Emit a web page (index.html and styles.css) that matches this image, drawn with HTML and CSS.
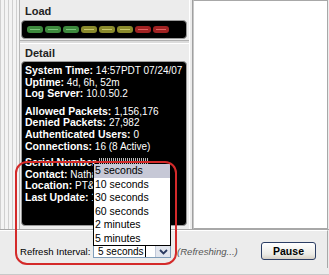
FILE: index.html
```html
<!DOCTYPE html>
<html>
<head>
<meta charset="utf-8">
<link rel="stylesheet" href="styles.css">
</head>
<body>
<div class="window">
  <div class="top">
    <div class="stripes"></div>
    <div class="left">
      <div class="head">Load</div>
      <div class="loadbox">
        <span class="led g"></span><span class="led g"></span><span class="led g"></span>
        <span class="led y"></span><span class="led y"></span><span class="led y"></span>
        <span class="led r"></span><span class="led r"></span>
      </div>
      <div class="sep"></div>
      <div class="head head2">Detail</div>
      <div class="detail">
        <div class="grp">
          <div><b>System Time:</b> 14:57PDT 07/24/07</div>
          <div><b>Uptime:</b> 4d, 6h, 52m</div>
          <div><b>Log Server:</b> 10.0.50.2</div>
        </div>
        <div class="grp">
          <div><b>Allowed Packets:</b> 1,156,176</div>
          <div><b>Denied Packets:</b> 27,982</div>
          <div><b>Authenticated Users:</b> 0</div>
          <div><b>Connections:</b> 16 (8 Active)</div>
        </div>
        <div class="grp">
          <div><b>Serial Number</b> <span class="blur"></span></div>
          <div><b>Contact:</b> Nathan</div>
          <div><b>Location:</b> PT&amp;P</div>
          <div><b>Last Update:</b> 14:57</div>
        </div>
      </div>
    </div>
    <div class="divider"></div>
    <div class="right"></div>
  </div>
  <div class="bottom">
    <span class="lbl">Refresh Interval:</span>
    <div class="select"><span class="val">5 seconds</span><span class="caret"></span><span class="arrow"><svg width="9" height="6" viewBox="0 0 9 6"><path d="M1 1 L4.5 4.5 L8 1" fill="none" stroke="#2a3a60" stroke-width="1.8"/></svg></span></div>
    <span class="status">(Refreshing...)</span>
    <button class="pause">Pause</button>
  </div>
  <ul class="list">
    <li class="sel">5 seconds</li>
    <li>10 seconds</li>
    <li>30 seconds</li>
    <li>60 seconds</li>
    <li>2 minutes</li>
    <li>5 minutes</li>
  </ul>
  <div class="mark"></div>
</div>
</body>
</html>
```
FILE: styles.css
```css
* { box-sizing: border-box; }
html, body { margin: 0; padding: 0; }
body {
  width: 329px; height: 275px; overflow: hidden;
  background: #ececec;
  font-family: "Liberation Sans", Arial, sans-serif;
  font-size: 10px;
  color: #000;
}
.window { position: relative; width: 329px; height: 275px; display: flex; flex-direction: column; border-bottom: 1px solid #c8c8c8; }
.top { display: flex; height: 230px; border-bottom: 1px solid #a8a8a8; }
.stripes {
  width: 20px;
  background: repeating-linear-gradient(90deg, #d0d0d0 0 1px, #f4f4f4 1px 4px);
  border-right: 1px solid #b8b8b8;
}
.left { width: 167px; padding-left: 1px; display: flex; flex-direction: column; }
.head { height: 20px; padding: 5px 0 0 4px; font-weight: bold; color: #222; font-size: 11px; line-height: 13px; }
.head2 { height: 17px; padding-top: 3px; }
.loadbox {
  height: 19px; background: #000; border-radius: 4px;
  border: 1px solid #9a9a9a;
  display: flex; align-items: center; gap: 2px; padding-left: 5px;
}
.led { width: 16px; height: 7px; border-radius: 3px; position: relative; }
.led::after { content: ""; position: absolute; left: 3px; right: 3px; top: 3px; height: 1px; }
.led.g { background: #3d8a3d; }
.led.g::after { background: #7cc57c; }
.led.y { background: #8a8a2c; }
.led.y::after { background: #c8c86a; }
.led.r { background: #a02222; }
.led.r::after { background: #e06060; }
.sep { height: 4px; margin: 1px -3px 0 -1px; border-top: 1px solid #b0b0b0; border-bottom: 1px solid #fff; background: #dcdcdc; }
.detail {
  height: 165px; background: #000; border-radius: 4px; border: 1px solid #9a9a9a;
  color: #fff; padding: 3px 0 0 3px; white-space: nowrap; overflow: hidden;
  font-size: 10px;
}
.detail .grp > div { height: 11.6px; line-height: 11.6px; }
.detail b { font-size: 10.5px; vertical-align: top; line-height: 11.6px; }
.grp + .grp { margin-top: 6px; }
.grp:last-child { margin-top: 5px; }
.blur { display: inline-block; width: 50px; height: 6px; background: repeating-linear-gradient(90deg, #bbb 0 1px, #000 1px 2px); vertical-align: top; margin-top: 1px; }
.divider { width: 6px; border-right: 1px solid #a0a0a0; position: relative; }
.divider::after { content: ""; position: absolute; right: 0; top: 0; bottom: 0; width: 2px; border-left: 1px solid #fff; }
.right { flex: 1; background: #fff; border: 1px solid #a8a8a8; border-left: 1px solid #c8c8c8; margin-right: 1px; }
.bottom { height: 38px; display: flex; align-items: center; padding: 4px 0 0 20px; border-top: 1px solid #fff; border-right: 1px solid #a8a8a8; margin-right: 1px; }
.lbl { width: 73px; white-space: nowrap; font-size: 9.6px; }
.select {
  width: 78px; height: 13px; border: 1px solid #7f9db9; background: #fff;
  display: flex; align-items: center; position: relative;
}
.val { padding-left: 4px; font-size: 10px; line-height: 11px; }
.caret { width: 1px; height: 11px; background: #000; margin-left: 1px; }
.arrow { position: absolute; right: 0; top: 0; bottom: 0; width: 15px; background: #e2e6ee; border-left: 1px solid #c0c8d8; display: flex; align-items: center; justify-content: center; }
.status { margin-left: 6px; font-style: italic; color: #555; font-size: 9.6px; white-space: nowrap; }
.pause {
  margin-left: auto; margin-right: 11px; width: 55px; height: 18px; margin-top: -2px;
  border: 1px solid #2c3e64; border-radius: 3px;
  background: linear-gradient(#ffffff, #ecebe6 70%, #d6d0c5);
  font-family: inherit; font-weight: bold; font-size: 10.5px; color: #000; padding: 0;
}
.list {
  position: absolute; left: 93px; top: 164px; width: 78px; margin: 0; padding: 0; list-style: none;
  background: #fff; border: 1px solid #000; border-top: none;
}
.list li { height: 13.5px; line-height: 13.5px; padding-left: 1px; font-size: 10.5px; }
.list li.sel { background: #c6c8d6; }
.mark {
  position: absolute; left: 15px; top: 161px; width: 162px; height: 104px;
  border: 2px solid #d42a2a; border-radius: 12px;
}
```
